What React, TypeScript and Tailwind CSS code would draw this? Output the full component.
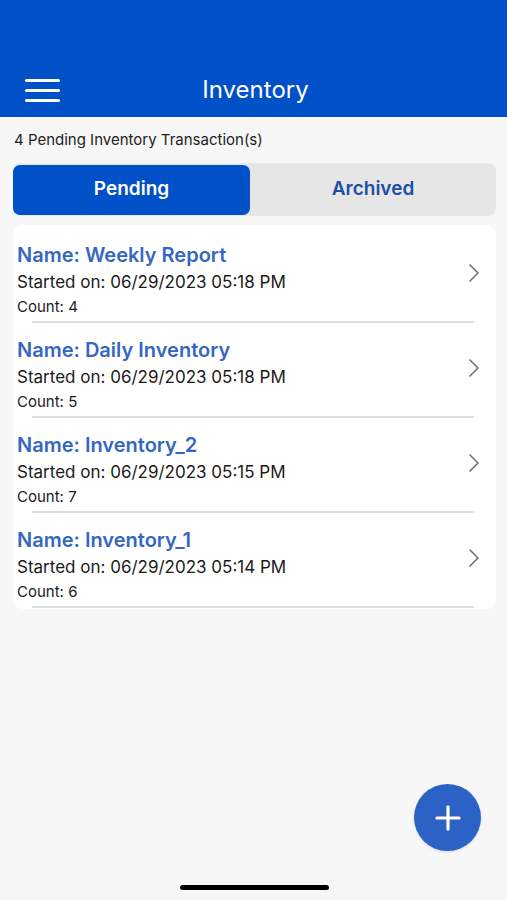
import { ChevronRight, Plus } from 'lucide-react';

const items = [
  { name: 'Weekly Report', started: '06/29/2023 05:18 PM', count: 4 },
  { name: 'Daily Inventory', started: '06/29/2023 05:18 PM', count: 5 },
  { name: 'Inventory_2', started: '06/29/2023 05:15 PM', count: 7 },
  { name: 'Inventory_1', started: '06/29/2023 05:14 PM', count: 6 },
];

export default function App() {
  return (
    <div className="relative w-[507px] h-[900px] bg-[#f7f7f7] overflow-hidden font-['Inter',sans-serif]">
      {/* Header */}
      <header className="h-[117px] bg-[#0050c8] flex items-end pb-[14px] px-[25px] relative">
        <div className="flex flex-col gap-[7px] pb-[1px]">
          <span className="block w-[35px] h-[3px] bg-white rounded" />
          <span className="block w-[35px] h-[3px] bg-white rounded" />
          <span className="block w-[35px] h-[3px] bg-white rounded" />
        </div>
        <h1 className="absolute left-[4px] right-0 bottom-[12px] text-center text-white text-[24px] leading-[30px]">
          Inventory
        </h1>
      </header>

      <p className="px-[14px] pt-[14px] text-[15px] text-[#222] leading-[18px]">
        4 Pending Inventory Transaction(s)
      </p>

      {/* Segmented tabs */}
      <div className="ml-[13px] mr-[11px] mt-[14px] h-[53px] bg-[#e6e6e6] rounded-[8px] flex items-center">
        <button className="w-[237px] h-[50px] bg-[#0050c8] rounded-[7px] text-white text-[19px] font-semibold">
          Pending
        </button>
        <button className="flex-1 text-[#1d4fa6] text-[19px] font-semibold">Archived</button>
      </div>

      {/* List */}
      <div className="ml-[13px] mr-[11px] mt-[9px] bg-white rounded-[10px] pt-[17px] pb-[1px]">
        {items.map((it, i) => (
          <div key={it.name} className="relative pl-[4px] pr-[6px]">
            <div className="flex items-center">
              <div className="flex-1">
                <div className="text-[20px] leading-[26px] font-semibold text-[#3567c2]">Name: {it.name}</div>
                <div className="mt-[3px] text-[17px] leading-[22px] text-[#1a1a1a]">Started on: {it.started}</div>
                <div className="mt-[4px] text-[15px] leading-[20px] text-[#1a1a1a]">Count: {it.count}</div>
              </div>
              <ChevronRight className="w-[32px] h-[32px] text-[#6f6f6f] -mt-[14px]" strokeWidth={1.2} />
            </div>
            <div
              className={
                i === items.length - 1
                  ? 'ml-[15px] mr-[16px] mt-[4px] h-[2px] bg-[#dedede]'
                  : 'ml-[15px] mr-[16px] mt-[4px] mb-[14px] h-[2px] bg-[#dedede]'
              }
            />
          </div>
        ))}
      </div>

      {/* FAB */}
      <button className="absolute left-[414px] top-[784px] w-[67px] h-[67px] rounded-full bg-[#2c62c6] flex items-center justify-center shadow">
        <Plus className="w-[38px] h-[38px] text-white" strokeWidth={2} />
      </button>

      {/* Home indicator */}
      <div className="absolute left-[180px] top-[885px] w-[149px] h-[5px] rounded-full bg-black" />
    </div>
  );
}
